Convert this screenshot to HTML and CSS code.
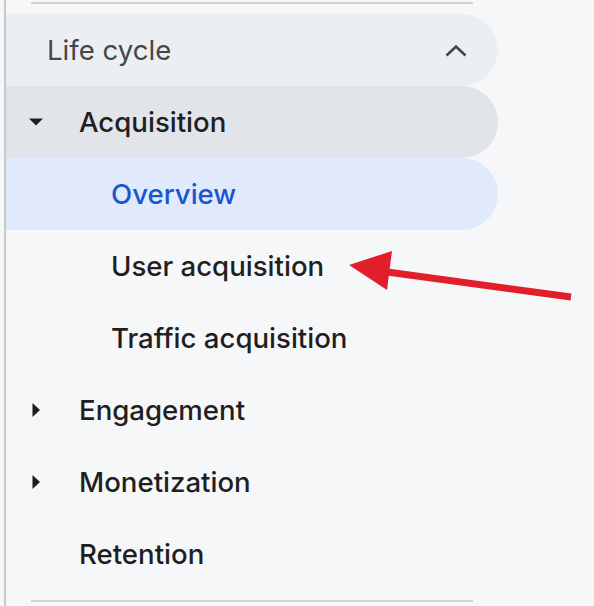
FILE: index.html
```html
<!DOCTYPE html>
<html>
<head>
<meta charset="utf-8">
<link rel="stylesheet" href="styles.css">
</head>
<body>
<div class="panel">
  <div class="divider top"></div>
  <nav class="menu">
    <div class="row section">
      <span class="label">Life cycle</span>
      <svg class="chev" width="24" height="24" viewBox="0 0 24 24"><path d="M2.5 17.5 12 8.5l9.5 9" fill="none" stroke="#444746" stroke-width="2.6"/></svg>
    </div>
    <div class="row group open">
      <span class="caret"><svg width="16" height="16" viewBox="0 0 16 16"><path d="M1 4.5h14L8 11.5z" fill="#1f1f1f"/></svg></span>
      <span class="label">Acquisition</span>
    </div>
    <div class="row sub active"><span class="label">Overview</span></div>
    <div class="row sub"><span class="label">User acquisition</span></div>
    <div class="row sub"><span class="label">Traffic acquisition</span></div>
    <div class="row group">
      <span class="caret"><svg width="16" height="16" viewBox="0 0 16 16"><path d="M4.5 1v14l7.5-7z" fill="#1f1f1f"/></svg></span>
      <span class="label">Engagement</span>
    </div>
    <div class="row group">
      <span class="caret"><svg width="16" height="16" viewBox="0 0 16 16"><path d="M4.5 1v14l7.5-7z" fill="#1f1f1f"/></svg></span>
      <span class="label">Monetization</span>
    </div>
    <div class="row group">
      <span class="caret"></span>
      <span class="label">Retention</span>
    </div>
  </nav>
  <div class="divider bottom"></div>
  <svg class="arrow" width="594" height="606" viewBox="0 0 594 606">
    <line x1="571" y1="297" x2="380" y2="271" stroke="#e31e2b" stroke-width="7"/>
    <path d="M349 265 L392 251 L387 290 Z" fill="#e31e2b"/>
  </svg>
</div>
</body>
</html>
```
FILE: styles.css
```css
html, body {
  margin: 0;
  padding: 0;
  background: #f6f7f9;
}
body {
  font-family: Inter, "Open Sans", Arial, sans-serif;
  width: 594px;
  height: 606px;
  overflow: hidden;
}
.panel {
  position: relative;
  margin-left: 4px;
  border-left: 2px solid #c8c9cb;
  height: 606px;
  box-sizing: border-box;
  padding-top: 2px;
}
.divider {
  height: 2px;
  width: 442px;
  background: #d2d3d5;
  margin-left: 25px;
}
.divider.bottom {
  margin-top: 10px;
}
.menu {
  margin-top: 10px;
  width: 492px;
  display: flex;
  flex-direction: column;
}
.row {
  height: 72px;
  display: flex;
  align-items: center;
  border-radius: 0 36px 36px 0;
  font-size: 27.6px;
  font-weight: 500;
  color: #1f1f1f;
}
.section {
  background: #eceff1;
  padding-left: 41px;
  padding-right: 30px;
  justify-content: space-between;
  color: #444746;
  font-weight: 400;
}
.group {
  padding-left: 22px;
}
.group.open {
  background: #e1e4e8;
}
.caret {
  width: 16px;
  height: 16px;
  margin-right: 35px;
  display: flex;
}
.sub {
  padding-left: 105px;
}
.sub.active {
  background: #e1eafd;
  color: #1a56d0;
}
.arrow {
  position: absolute;
  left: -6px;
  top: 0;
  pointer-events: none;
}
```
